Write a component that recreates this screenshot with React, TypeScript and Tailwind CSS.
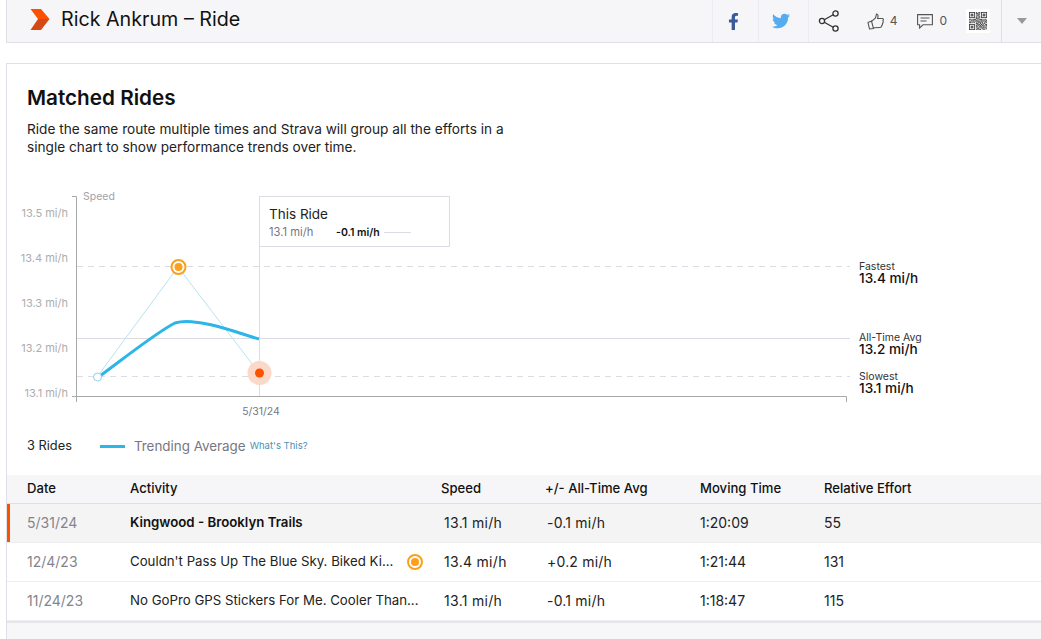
import { FaFacebookF, FaTwitter } from 'react-icons/fa';

const rows = [
    { date: '5/31/24', name: 'Kingwood - Brooklyn Trails', speed: '13.1 mi/h', diff: '-0.1 mi/h', time: '1:20:09', effort: '55', current: true },
    { date: '12/4/23', name: "Couldn't Pass Up The Blue Sky. Biked Ki...", speed: '13.4 mi/h', diff: '+0.2 mi/h', time: '1:21:44', effort: '131', best: true },
    { date: '11/24/23', name: 'No GoPro GPS Stickers For Me. Cooler Than...', speed: '13.1 mi/h', diff: '-0.1 mi/h', time: '1:18:47', effort: '115' },
];

const qrCells = [
    '111111101001101111111',
    '100000101110101000001',
    '101110100101001011101',
    '101110101011101011101',
    '101110100110001011101',
    '100000101001101000001',
    '111111101010101111111',
    '000000001101000000000',
    '110101110010111010110',
    '001011001101001101001',
    '101100111010110010111',
    '010011000111001101010',
    '111010101001110100101',
    '000000001110010101100',
    '111111100101101010011',
    '100000101011010110101',
    '101110101100111001010',
    '101110100110100111001',
    '101110101001011010110',
    '100000100111000101001',
    '111111101010110010100',
];

function QrCode() {
    return (
        <div className="flex h-6 w-6 items-center justify-center bg-white">
            <svg width="18" height="18" viewBox="0 0 21 21">
                {qrCells.map((row, y) =>
                    row.split('').map((cell, x) =>
                        cell === '1' ? <rect key={`${x}-${y}`} x={x} y={y} width="1.05" height="1.05" fill="#222" /> : null
                    )
                )}
            </svg>
        </div>
    );
}

function Header() {
    return (
        <div className="ml-1.5 flex h-[43px] items-stretch border-b border-l border-[#dfdfe8] bg-[#f6f6f9]">
            <svg width="20" height="24" viewBox="0 0 20 24" className="ml-[23px] mt-[8px]">
                <path d="M0.5 1 H11 L19.5 11 H8 Z" fill="#fc5200" />
                <path d="M8 11 H19.5 L11 22 H0.5 Z" fill="#d44a17" />
            </svg>
            <div className="ml-[11px] pt-[5px] text-[19.7px] leading-7 text-[#111]">Rick Ankrum – Ride</div>
            <div className="ml-auto flex items-stretch">
                <div className="flex w-[46px] items-center justify-center border-l border-[#ebebf0] pr-1">
                    <FaFacebookF size={17} className="text-[#3b5998]" />
                </div>
                <div className="flex w-[50px] items-center justify-center border-l border-[#ebebf0] pr-1">
                    <FaTwitter size={18} className="text-[#55acee]" />
                </div>
                <div className="flex w-[40px] items-center justify-center border-l border-[#ebebf0] pl-0.5">
                    <svg width="22" height="22" viewBox="0 0 22 22" fill="none" stroke="#333" strokeWidth="1.3">
                        <circle cx="4" cy="11" r="2.6" />
                        <circle cx="17.5" cy="3.5" r="2.6" />
                        <circle cx="17.5" cy="18.5" r="2.6" />
                        <path d="M6.3 9.7 L15.2 4.8 M6.3 12.3 L15.2 17.2" />
                    </svg>
                </div>
                <div className="ml-[19px] flex items-center text-[12px] text-[#555]">
                    <svg width="17" height="17" viewBox="0 0 17 17" fill="none" stroke="#555" strokeWidth="1.1">
                        <path d="M1 9.5 L4.5 8 L6.5 15.5 L2.5 16 Z" />
                        <path d="M4.6 8.4 L8.5 5 L9.5 1 C11 1 11.5 2.5 10.6 5.5 L15.5 5.5 C16.5 5.5 16.5 7 16 7.5 C16.5 9 16 10 15.5 10.5 C15.7 11.7 15 12.5 14.5 13 C14.5 14.5 13.8 14.5 13 14.5 L6.4 14.8" />
                    </svg>
                    <span className="ml-[6px]">4</span>
                </div>
                <div className="ml-[20px] flex items-center text-[12px] text-[#555]">
                    <svg width="16" height="15" viewBox="0 0 16 15" fill="none" stroke="#555" strokeWidth="1.1">
                        <path d="M0.6 0.6 H15.4 V10.8 H6 L2.6 14 V10.8 H0.6 Z" />
                        <path d="M3.5 4 H12.5 M3.5 7 H9.5" />
                    </svg>
                    <span className="ml-[6px]">0</span>
                </div>
                <div className="ml-[19px] flex items-center">
                    <QrCode />
                </div>
                <div className="ml-[11px] flex w-[40px] items-center justify-center border-l border-[#dfdfe8]">
                    <div className="h-0 w-0 border-x-[5px] border-t-[6px] border-x-transparent border-t-[#999]" />
                </div>
            </div>
        </div>
    );
}

// chart coordinates are relative to the card's left edge and the svg's top
function SpeedChart() {
    const labels = [
        { text: '13.5 mi/h', y: 31 },
        { text: '13.4 mi/h', y: 76 },
        { text: '13.3 mi/h', y: 121 },
        { text: '13.2 mi/h', y: 166 },
        { text: '13.1 mi/h', y: 211 },
    ];
    return (
        <svg width="1034" height="234" viewBox="0 0 1034 234" className="mt-[30px] block" style={{ fontFamily: 'Inter, sans-serif' }}>
            {labels.map((l) => (
                <text key={l.text} x="61" y={l.y} textAnchor="end" fontSize="11" fill="#adadad">{l.text}</text>
            ))}
            <text x="76" y="14" fontSize="10.5" fill="#a3a3a8">Speed</text>
            <path d="M65 10.5 H69.5 V216 M65 210.5 H839.5 V216" fill="none" stroke="#a8a8a8" strokeWidth="1" />
            <path d="M70 80.5 H843" stroke="#dcdce4" strokeDasharray="6 5" />
            <path d="M70 152.5 H843" stroke="#dcdce4" />
            <path d="M70 190.5 H843" stroke="#dcdce4" strokeDasharray="6 5" />
            <path d="M252.5 10 V210" stroke="#dcdce4" />

            <rect x="252.5" y="10.5" width="190" height="50" fill="#fff" stroke="#dcdce4" />
            <text x="262" y="33" fontSize="13.5" fill="#222">This Ride</text>
            <text x="262" y="50" fontSize="11.2" fill="#77777f">13.1 mi/h</text>
            <text x="329" y="50" fontSize="10.5" fontWeight="600" fill="#111">-0.1 mi/h</text>
            <path d="M377 46.5 H404" stroke="#dcdce4" />

            <path d="M90 191 L171 81 L252 187" fill="none" stroke="#b8e2f3" strokeWidth="1" />
            <path d="M93 190 C120 170 150 146 168 137 C178 134 190 136 205 139 C222 143 238 149 252 153" fill="none" stroke="#2bb5e8" strokeWidth="3" />
            <circle cx="90.5" cy="191" r="4" fill="#fff" stroke="#8fd2ec" strokeWidth="1" />
            <circle cx="171.5" cy="81" r="7" fill="#fff" stroke="#fc9f1c" strokeWidth="2" />
            <circle cx="171.5" cy="81" r="4" fill="#fc9f1c" />
            <circle cx="252.5" cy="187" r="12" fill="#fbd8c8" />
            <circle cx="252.5" cy="187" r="4.5" fill="#fc5200" />

            <text x="852" y="84" fontSize="10.5" fill="#333">Fastest</text>
            <text x="852" y="97" fontSize="13.6" fontWeight="500" fill="#111">13.4 mi/h</text>
            <text x="852" y="155" fontSize="10.5" fill="#333">All-Time Avg</text>
            <text x="852" y="168" fontSize="13.6" fontWeight="500" fill="#111">13.2 mi/h</text>
            <text x="852" y="194" fontSize="10.5" fill="#333">Slowest</text>
            <text x="852" y="207" fontSize="13.6" fontWeight="500" fill="#111">13.1 mi/h</text>

            <text x="254" y="229" textAnchor="middle" fontSize="10.5" fill="#77777f">5/31/24</text>
        </svg>
    );
}

function BestIcon() {
    return (
        <span className="flex h-4 w-4 shrink-0 items-center justify-center rounded-full border-2 border-[#fc9f1c]">
            <span className="h-2 w-2 rounded-full bg-[#fc9f1c]" />
        </span>
    );
}

const gridCols = 'grid grid-cols-[123px_311px_104px_155px_124px_1fr] items-center';

export default function App() {
    return (
        <div className="min-h-[639px] bg-white text-[13px] text-[#222]" style={{ fontFamily: 'Inter, "Liberation Sans", sans-serif' }}>
            <Header />
            <div className="ml-1.5 mt-5 border-l border-t border-[#dfdfe8]">
                <h2 className="ml-5 mt-5 text-[20.7px] font-semibold leading-7 text-[#111]">Matched Rides</h2>
                <p className="ml-5 mt-2 w-[490px] text-[13.65px] leading-[18px] text-[#222]">
                    Ride the same route multiple times and Strava will group all the efforts in a single chart to show performance trends over time.
                </p>
                <SpeedChart />
                <div className="ml-5 mt-[18px] flex h-[16px] items-center">
                    <span className="text-[12.8px] text-[#222]">3 Rides</span>
                    <span className="ml-[28px] h-[3px] w-[25px] bg-[#2bb5e8]" />
                    <span className="ml-[9px] text-[13.4px] text-[#77777f]">Trending Average</span>
                    <span className="ml-1 text-[9.5px] text-[#4a90b8]">What's This?</span>
                </div>
                <div className={`${gridCols} mt-[21px] h-[29px] border-b border-[#dfdfe8] bg-[#f6f6f8] text-[13.1px] text-[#111] font-medium`}>
                    <span className="pl-5">Date</span>
                    <span>Activity</span>
                    <span>Speed</span>
                    <span>+/- All-Time Avg</span>
                    <span>Moving Time</span>
                    <span>Relative Effort</span>
                </div>
                {rows.map((r) => (
                    <div
                        key={r.date}
                        className={`${gridCols} h-[39px] border-b border-[#eeeef2] text-[14px] ${r.current ? 'bg-[#f4f4f5] shadow-[inset_3px_0_0_#fc5200]' : ''}`}
                    >
                        <span className="pb-0.5 pl-5 text-[#84848c]">{r.date}</span>
                        <span className={`flex items-center justify-between pr-[18px] text-[13.25px] ${r.current ? 'font-semibold text-[#111]' : 'text-[#222]'}`}>
                            <span className="whitespace-nowrap">{r.name}</span>
                            {r.best && <BestIcon />}
                        </span>
                        <span className="pb-0.5 pl-[3px] tracking-[0.3px]">{r.speed}</span>
                        <span className="pb-0.5 pl-[2px] tracking-[0.2px]">{r.diff}</span>
                        <span className="pb-0.5">{r.time}</span>
                        <span className="pb-0.5">{r.effort}</span>
                    </div>
                ))}
                <div className="h-[19px] border-t-2 border-[#e6e6ea] bg-[#f7f7f9]" />
            </div>
        </div>
    );
}
